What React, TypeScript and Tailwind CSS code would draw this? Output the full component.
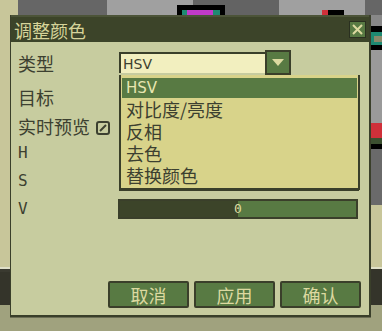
import React from "react";

const cjk = { fontFamily: '"Noto Sans CJK SC", "Noto Sans", sans-serif' };
const mono = { fontFamily: '"DejaVu Sans Mono", "Liberation Mono", monospace' };

function Slider({ dark }: { dark?: boolean }) {
  return (
    <div className="relative h-[20px] w-[240px] border-2 border-[#3a3f2a] bg-[#587a43] flex">
      <div className="w-[118px] h-full bg-[#3c4429]" />
      {dark && (
        <span className="absolute left-[114px] top-[0px] text-[13px] leading-[16px] text-[#dcd9a0]" style={mono}>
          0
        </span>
      )}
    </div>
  );
}

export default function App() {
  return (
    <div className="relative w-[382px] h-[331px] overflow-hidden bg-[#a0a27e]" style={cjk}>
      {/* background desktop */}
      <div className="absolute left-0 top-0 w-[382px] h-[15px] flex">
        <div className="w-[18px] bg-[#c8c69a]" />
        <div className="w-[89px] bg-[#666666]" />
        <div className="w-[86px] bg-[#a0a0a0]" />
        <div className="w-[86px] bg-[#636363]" />
        <div className="w-[86px] bg-[#a0a0a0]" />
        <div className="flex-1 bg-[#666666]" />
      </div>
      <div className="absolute left-[177px] top-[5px] w-[48px] h-[10px] bg-black">
        <div className="absolute left-[5px] top-[5px] w-[5px] h-[5px] bg-[#1e8a72]" />
        <div className="absolute left-[10px] top-[5px] w-[26px] h-[5px] bg-[#c03ac8]" />
        <div className="absolute left-[36px] top-[5px] w-[7px] h-[5px] bg-[#1e8a72]" />
      </div>
      <div className="absolute left-[322px] top-[10px] w-[6px] h-[5px] bg-[#d0303a]" />
      <div className="absolute left-[328px] top-[10px] w-[16px] h-[5px] bg-black" />
      <div className="absolute left-0 top-[15px] w-[10px] h-[252px] bg-[#c8c69a]" />
      <div className="absolute left-0 top-[267px] w-[10px] h-[2px] bg-[#e0e0c8]" />
      <div className="absolute left-0 top-[269px] w-[10px] h-[3px] bg-[#3a3a30]" />
      <div className="absolute left-0 top-[272px] w-[10px] h-[33px] bg-[#34342a]" />
      {/* right strip */}
      <div className="absolute left-[371px] top-[15px] w-[11px] h-[252px] bg-[#888888]" />
      <div className="absolute left-[371px] top-[26px] w-[11px] h-[6px] bg-black" />
      <div className="absolute left-[371px] top-[32px] w-[11px] h-[13px] bg-[#1e8a72]" />
      <div className="absolute left-[374px] top-[36px] w-[8px] h-[6px] bg-[#8a8a6a]" />
      <div className="absolute left-[371px] top-[45px] w-[11px] h-[5px] bg-black" />
      <div className="absolute left-[371px] top-[50px] w-[11px] h-[73px] bg-[#9a9a9a]" />
      <div className="absolute left-[371px] top-[123px] w-[11px] h-[15px] bg-[#d0303a]" />
      <div className="absolute left-[371px] top-[138px] w-[11px] h-[6px] bg-[#3c5030]" />
      <div className="absolute left-[371px] top-[144px] w-[11px] h-[5px] bg-black" />
      <div className="absolute left-[371px] top-[149px] w-[11px] h-[56px] bg-[#6a6a6a]" />
      <div className="absolute left-[371px] top-[205px] w-[11px] h-[62px] bg-[#c8c69a]" />
      <div className="absolute left-[371px] top-[267px] w-[11px] h-[2px] bg-[#e0e0c8]" />
      <div className="absolute left-[371px] top-[269px] w-[11px] h-[36px] bg-[#34342a]" />

      {/* dialog */}
      <div className="absolute left-[10px] top-[15px] w-[361px] h-[302px] flex flex-col border-l border-r-2 border-b-2 border-[#3a3f2a] shadow-[0_1px_0_#6c6e55]">
        <div className="h-[27px] bg-[#3c4429] border-t-2 border-[#4c5438] flex items-center justify-between pl-[3px] pr-[3px]">
          <span className="text-[18px] leading-[20px] text-[#d6d49a]">调整颜色</span>
          <div className="w-[17px] h-[17px] bg-[#587a43] border border-[#2a3020] flex items-center justify-center">
            <svg width="11" height="11" viewBox="0 0 11 11">
              <path d="M1 1 L10 10 M10 1 L1 10" stroke="#dcd9a0" strokeWidth="2" />
            </svg>
          </div>
        </div>
        <div className="relative flex-1 bg-[#c7cc9f] flex flex-col pl-[7px] pr-[8px]">
          {/* row 类型 */}
          <div className="mt-[8px] h-[25px] flex items-center">
            <span className="w-[101px] text-[18px] leading-[20px] text-[#3c4030]">类型</span>
            <div className="w-[146px] h-[21px] bg-[#f2efbf] border-t-2 border-l-2 border-[#3a3f2a] flex items-center pl-[2px]">
              <span className="text-[14px] leading-[16px] text-[#3c4030]" style={{ fontFamily: '"DejaVu Sans", sans-serif' }}>HSV</span>
            </div>
            <div className="w-[26px] h-[25px] bg-[#587a43] border-2 border-[#3a3f2a] flex items-center justify-center">
              <svg width="12" height="8" viewBox="0 0 12 8">
                <path d="M0 0 H12 L6 7 Z" fill="#dcd9a0" />
              </svg>
            </div>
          </div>
          <div className="mt-[12px] h-[20px] flex items-center">
            <span className="w-[101px] text-[18px] leading-[20px] text-[#3c4030]">目标</span>
          </div>
          <div className="mt-[9px] h-[20px] flex items-center">
            <span className="text-[18px] leading-[20px] text-[#3c4030]">实时预览</span>
            <div className="ml-[6px] mt-[4px] w-[14px] h-[14px] rounded-[3px] border-2 border-[#3c4030] flex items-center justify-center">
              <svg width="8" height="8" viewBox="0 0 8 8">
                <path d="M7 1 L1 7" stroke="#3c4030" strokeWidth="2" />
              </svg>
            </div>
          </div>
          <div className="mt-[7px] h-[20px] flex items-center">
            <span className="w-[101px] text-[16px] leading-[18px] text-[#3c4030]" style={mono}>H</span>
            <Slider />
          </div>
          <div className="mt-[8px] h-[20px] flex items-center">
            <span className="w-[101px] text-[16px] leading-[18px] text-[#3c4030]" style={mono}>S</span>
            <Slider />
          </div>
          <div className="mt-[8px] h-[20px] flex items-center">
            <span className="w-[100px] text-[16px] leading-[18px] text-[#3c4030]" style={mono}>V</span>
            <Slider dark />
          </div>
          <div className="flex-1" />
          <div className="mb-[7px] flex justify-end gap-[5px]">
            {["取消", "应用", "确认"].map((t) => (
              <div
                key={t}
                className="w-[81px] h-[27px] bg-[#587a43] border-2 border-[#3a3f2a] rounded-[2px] flex items-center justify-center text-[18px] leading-[20px] text-[#dcd9a0]"
              >
                {t}
              </div>
            ))}
          </div>

          {/* dropdown list */}
          <div className="absolute left-[108px] top-[33px] w-[241px] h-[115px] bg-[#d8d38a] border-l-2 border-b-2 border-r-2 border-[#3a3f2a] pt-[3px] px-[1px] flex flex-col">
            <div className="h-[20px] bg-[#587a43] flex items-center pl-[4px]">
              <span className="text-[15px] leading-[16px] text-[#e8e6b0]" style={{ fontFamily: '"DejaVu Sans", sans-serif' }}>HSV</span>
            </div>
            {["对比度/亮度", "反相", "去色", "替换颜色"].map((t) => (
              <div key={t} className="h-[22px] flex items-center pl-[4px] text-[18px] leading-[20px] text-[#3c4030]">
                {t}
              </div>
            ))}
          </div>
        </div>
      </div>
    </div>
  );
}
